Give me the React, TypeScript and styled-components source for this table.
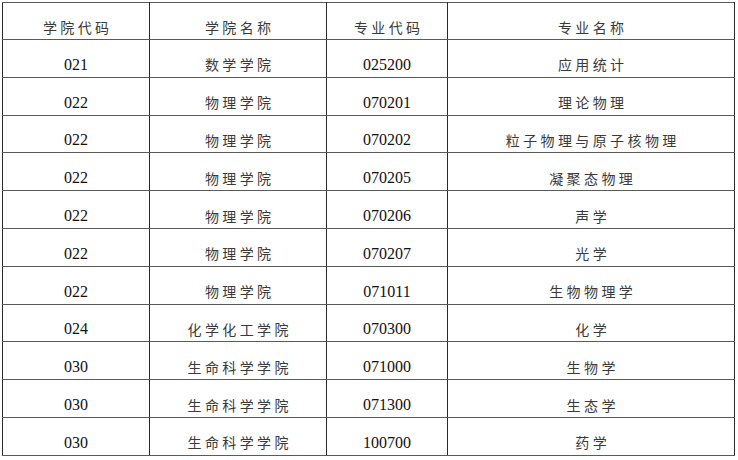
import React from 'react';
import styled, { createGlobalStyle } from 'styled-components';

const GlobalStyle = createGlobalStyle`
  html, body {
    margin: 0;
    padding: 0;
    background: #fff;
  }
`

const Page = styled.div`
  padding: 2px 0 0 2px;
  width: 738px;
  height: 460px;
  box-sizing: border-box;
  background: #fff;
`

const Table = styled.table`
  border-collapse: collapse;
  table-layout: fixed;
  width: 732px;
`

const Col = styled.col<{ $w: number }>`
  width: ${p => p.$w}px;
`

const Row = styled.tr<{ $h: number }>`
  height: ${p => p.$h}px;
`

const Cell = styled.td`
  border-left: 1px solid #2a2a2a;
  border-right: 1px solid #2a2a2a;
  border-top: 1px solid #5a5a5a;
  border-bottom: 1px solid #5a5a5a;
  padding: 13px 0 0 0;
  text-align: center;
  vertical-align: middle;
  font-family: "Liberation Serif", "Times New Roman", serif;
  font-size: 16px;
  line-height: 18px;
  color: #111;
  white-space: nowrap;
`

const Han = styled.span`
  font-family: "Noto Sans CJK SC", sans-serif;
  font-size: 14px;
  letter-spacing: 3.4px;
  margin-right: -3.4px;
  color: #3a3a3a;
`

type Item = { college: string, collegeName: string, major: string, majorName: string }

const rows: Item[] = [
  { college: '021', collegeName: '数学学院', major: '025200', majorName: '应用统计' },
  { college: '022', collegeName: '物理学院', major: '070201', majorName: '理论物理' },
  { college: '022', collegeName: '物理学院', major: '070202', majorName: '粒子物理与原子核物理' },
  { college: '022', collegeName: '物理学院', major: '070205', majorName: '凝聚态物理' },
  { college: '022', collegeName: '物理学院', major: '070206', majorName: '声学' },
  { college: '022', collegeName: '物理学院', major: '070207', majorName: '光学' },
  { college: '022', collegeName: '物理学院', major: '071011', majorName: '生物物理学' },
  { college: '024', collegeName: '化学化工学院', major: '070300', majorName: '化学' },
  { college: '030', collegeName: '生命科学学院', major: '071000', majorName: '生物学' },
  { college: '030', collegeName: '生命科学学院', major: '071300', majorName: '生态学' },
  { college: '030', collegeName: '生命科学学院', major: '100700', majorName: '药学' },
]

const App = () => {
  return (
    <Page>
      <GlobalStyle />
      <Table>
        <colgroup>
          <Col $w={147} />
          <Col $w={177} />
          <Col $w={121} />
          <Col $w={287} />
        </colgroup>
        <thead>
          <Row $h={37}>
            <Cell><Han>学院代码</Han></Cell>
            <Cell><Han>学院名称</Han></Cell>
            <Cell><Han>专业代码</Han></Cell>
            <Cell><Han>专业名称</Han></Cell>
          </Row>
        </thead>
        <tbody>
          {rows.map((r, i) => (
            <Row $h={37.8} key={i}>
              <Cell>{r.college}</Cell>
              <Cell><Han>{r.collegeName}</Han></Cell>
              <Cell>{r.major}</Cell>
              <Cell><Han>{r.majorName}</Han></Cell>
            </Row>
          ))}
        </tbody>
      </Table>
    </Page>
  )
}

export default App;
